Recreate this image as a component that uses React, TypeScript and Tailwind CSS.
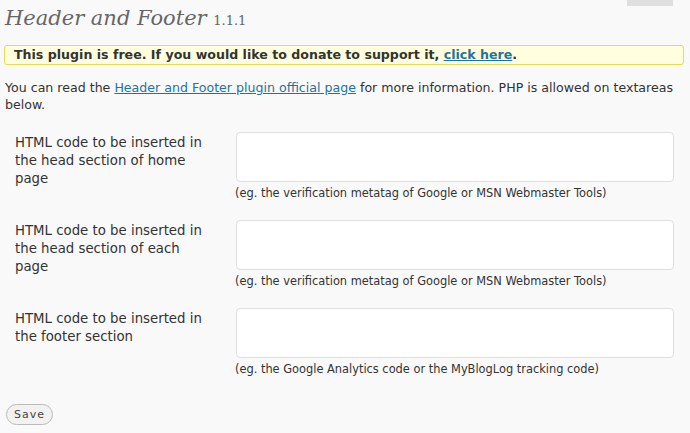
import { useState } from "react";

const rows = [
    {
        label: "HTML code to be inserted in the head section of home page",
        note: "(eg. the verification metatag of Google or MSN Webmaster Tools)",
    },
    {
        label: "HTML code to be inserted in the head section of each page",
        note: "(eg. the verification metatag of Google or MSN Webmaster Tools)",
    },
    {
        label: "HTML code to be inserted in the footer section",
        note: "(eg. the Google Analytics code or the MyBlogLog tracking code)",
    },
];

export default function App() {
    const [values, setValues] = useState(["", "", ""]);

    const handleChange = (index: number, value: string) => {
        const newValues = [...values];
        newValues[index] = value;
        setValues(newValues);
    };

    return (
        <div className="relative min-h-screen bg-[#f9f9f9] font-['Verdana','DejaVu_Sans',sans-serif] text-[12.6px] text-[#333]">
            <div className="absolute right-[17px] top-0 h-[6px] w-[46px] bg-[#dfdfdf]" />

            <h2 className="pl-[5px] pt-[3px] font-['DejaVu_Serif',Georgia,serif] text-[21px] leading-[30px] italic text-[#666]">
                Header and Footer <span className="text-[13px] not-italic">1.1.1</span>
            </h2>

            <div className="mt-[9px] ml-[4px] mr-[6px] h-[20px] rounded-[3px] border border-[#e6db55] bg-[#ffffe0] pl-[9px] font-bold leading-[18px]">
                This plugin is free. If you would like to donate to support it,{" "}
                <a href="#" className="text-[#21759b] underline">click here</a>.
            </div>

            <p className="mt-[14px] px-[5px] leading-[17px]">
                You can read the{" "}
                <a href="#" className="text-[#21759b] underline">Header and Footer plugin official page</a>{" "}
                for more information. PHP is allowed on textareas below.
            </p>

            <form className="mt-[19px] flex flex-col gap-[20px]" onSubmit={(e) => e.preventDefault()}>
                {rows.map((row, index) => (
                    <div key={index} className="flex">
                        <label
                            htmlFor={`ta-${index}`}
                            className="w-[236px] shrink-0 pl-[15px] pr-[28px] pt-[2px] text-[13.3px] leading-[18px]"
                        >
                            {row.label}
                        </label>
                        <div className="flex flex-col">
                            <textarea
                                id={`ta-${index}`}
                                value={values[index]}
                                onChange={(e) => handleChange(index, e.target.value)}
                                className="h-[50px] w-[438px] resize-none rounded-[4px] border border-[#dfdfdf] bg-white focus:outline-none"
                            />
                            <span className="mt-[4px] -ml-[1px] text-[11.4px] leading-[14px] text-[#333]">{row.note}</span>
                        </div>
                    </div>
                ))}

                <div className="mt-[8px] pl-[6px]">
                    <button
                        type="submit"
                        className="h-[21px] w-[47px] rounded-full border border-[#bbb] bg-[#f2f2f2] text-[11px] leading-[18px] tracking-[1px] text-[#464646]"
                    >
                        Save
                    </button>
                </div>
            </form>
        </div>
    );
}
